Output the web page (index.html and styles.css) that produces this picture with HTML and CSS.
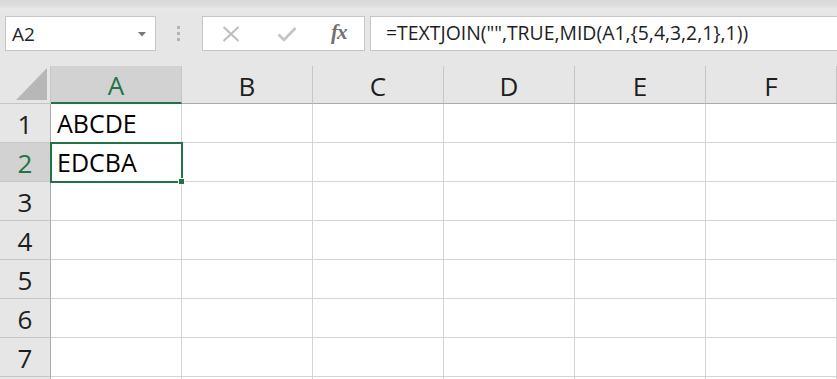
FILE: index.html
```html
<!DOCTYPE html>
<html>
<head>
<meta charset="utf-8">
<link rel="stylesheet" href="styles.css">
</head>
<body>
<div class="toolbar">
  <div class="namebox">
    <span class="name">A2</span>
    <svg class="dd" width="8" height="5" viewBox="0 0 8 5"><path d="M0 0 L8 0 L4 4.5 Z" fill="#777"/></svg>
  </div>
  <div class="sep">
    <span class="dot"></span><span class="dot"></span><span class="dot"></span>
  </div>
  <div class="fbuttons">
    <svg class="ic-x" width="18" height="16" viewBox="0 0 18 16"><path d="M1.5 1 L16.5 15 M16.5 1 L1.5 15" stroke="#bdbdbd" stroke-width="2" fill="none"/></svg>
    <svg class="ic-ok" width="20" height="16" viewBox="0 0 20 16"><path d="M1.5 8.5 L7 14 L18.5 2" stroke="#c4c4c4" stroke-width="2.6" fill="none"/></svg>
    <span class="fx">fx</span>
  </div>
  <div class="formula">=TEXTJOIN("",TRUE,MID(A1,{5,4,3,2,1},1))</div>
</div>
<div class="sheet">
  <div class="corner"><span class="tri"></span></div>
  <div class="ch sel">A</div>
  <div class="ch">B</div>
  <div class="ch">C</div>
  <div class="ch">D</div>
  <div class="ch">E</div>
  <div class="ch">F</div>

  <div class="rh">1</div><div class="c">ABCDE</div><div class="c"></div><div class="c"></div><div class="c"></div><div class="c"></div><div class="c"></div>
  <div class="rh sel">2</div><div class="c">EDCBA</div><div class="c"></div><div class="c"></div><div class="c"></div><div class="c"></div><div class="c"></div>
  <div class="rh">3</div><div class="c"></div><div class="c"></div><div class="c"></div><div class="c"></div><div class="c"></div><div class="c"></div>
  <div class="rh">4</div><div class="c"></div><div class="c"></div><div class="c"></div><div class="c"></div><div class="c"></div><div class="c"></div>
  <div class="rh">5</div><div class="c"></div><div class="c"></div><div class="c"></div><div class="c"></div><div class="c"></div><div class="c"></div>
  <div class="rh">6</div><div class="c"></div><div class="c"></div><div class="c"></div><div class="c"></div><div class="c"></div><div class="c"></div>
  <div class="rh">7</div><div class="c"></div><div class="c"></div><div class="c"></div><div class="c"></div><div class="c"></div><div class="c"></div>
  <div class="rh stub"></div><div class="c stub"></div><div class="c stub"></div><div class="c stub"></div><div class="c stub"></div><div class="c stub"></div><div class="c stub"></div>

  <div class="selbox"><span class="handle"></span></div>
</div>
</body>
</html>
```
FILE: styles.css
```css
* { box-sizing: border-box; }
html, body { margin: 0; padding: 0; }
body {
  width: 837px;
  height: 379px;
  overflow: hidden;
  background: #e6e6e6;
  font-family: "Open Sans", "Noto Sans", sans-serif;
  color: #1e1e1e;
}
.toolbar {
  height: 66px;
  display: flex;
  align-items: flex-start;
  padding: 16px 0 0 5px;
  background: linear-gradient(#d9d9d9 0, #dedede 6px, #e8e8e8 9px, #e6e6e6 16px);
}
.namebox {
  width: 151px;
  height: 35px;
  background: #fff;
  border: 1px solid #c6c6c6;
  display: flex;
  align-items: center;
  justify-content: space-between;
  padding: 0 9px 0 6px;
}
.name { font-size: 19px; color: #262626; }
.dd { margin-top: 1px; }
.sep {
  width: 46px;
  height: 35px;
  display: flex;
  flex-direction: column;
  align-items: center;
  justify-content: center;
  gap: 3px;
}
.dot { width: 3px; height: 3px; background: #b4b4b4; margin-left: -1px; }
.fbuttons {
  width: 163px;
  height: 35px;
  background: #fff;
  border: 1px solid #c6c6c6;
  display: flex;
  align-items: center;
  padding-left: 19px;
}
.ic-x { margin-right: 37px; }
.ic-ok { margin-right: 34px; }
.fx {
  font-family: "Liberation Serif", "DejaVu Serif", serif;
  font-style: italic;
  font-weight: bold;
  font-size: 21px;
  color: #707070;
  margin-top: -3px;
  letter-spacing: -1px;
}
.formula {
  flex: 1;
  height: 35px;
  margin-left: 5px;
  background: #fff;
  border: 1px solid #c6c6c6;
  border-right: none;
  font-size: 19.4px;
  line-height: 32px;
  padding-left: 15px;
  color: #1e1e1e;
  white-space: nowrap;
}
.sheet {
  position: relative;
  display: grid;
  grid-template-columns: 51px repeat(6, 131px);
  grid-template-rows: 38px repeat(7, 39px) 2px;
  background: #fff;
}
.corner {
  position: relative;
  background: #e6e6e6;
  border-right: 1px solid #c6c6c6;
  border-bottom: 1px solid #c6c6c6;
}
.tri {
  position: absolute;
  right: 3px;
  bottom: 3px;
  width: 0;
  height: 0;
  border-left: 31px solid transparent;
  border-bottom: 32px solid #b7b7b7;
}
.ch {
  background: #e6e6e6;
  border-right: 1px solid #c6c6c6;
  border-bottom: 1px solid #ababab;
  display: flex;
  align-items: center;
  justify-content: center;
  font-size: 26px;
  padding-top: 2px;
  color: #1e1e1e;
}
.ch.sel {
  background: #d2d2d2;
  color: #217346;
  border-bottom: 2px solid #217346;
  border-right-color: #c6c6c6;
}
.rh {
  background: #e6e6e6;
  border-right: 1px solid #ababab;
  border-bottom: 1px solid #c6c6c6;
  display: flex;
  align-items: center;
  justify-content: center;
  font-size: 26px;
  padding-top: 1px;
  color: #1e1e1e;
}
.rh.sel {
  background: #d2d2d2;
  color: #217346;
}
.c {
  border-right: 1px solid #d4d4d4;
  border-bottom: 1px solid #d4d4d4;
  font-size: 25px;
  line-height: 38px;
  padding: 0 0 0 6px;
  color: #000;
  white-space: nowrap;
}
.stub { border-bottom: none; padding: 0; }
.selbox {
  position: absolute;
  left: 50px;
  top: 76px;
  width: 133px;
  height: 41px;
  border: 2px solid #217346;
  pointer-events: none;
}
.handle {
  position: absolute;
  right: -4px;
  bottom: -4px;
  width: 7px;
  height: 7px;
  background: #217346;
  border: 1px solid #fff;
}
```
